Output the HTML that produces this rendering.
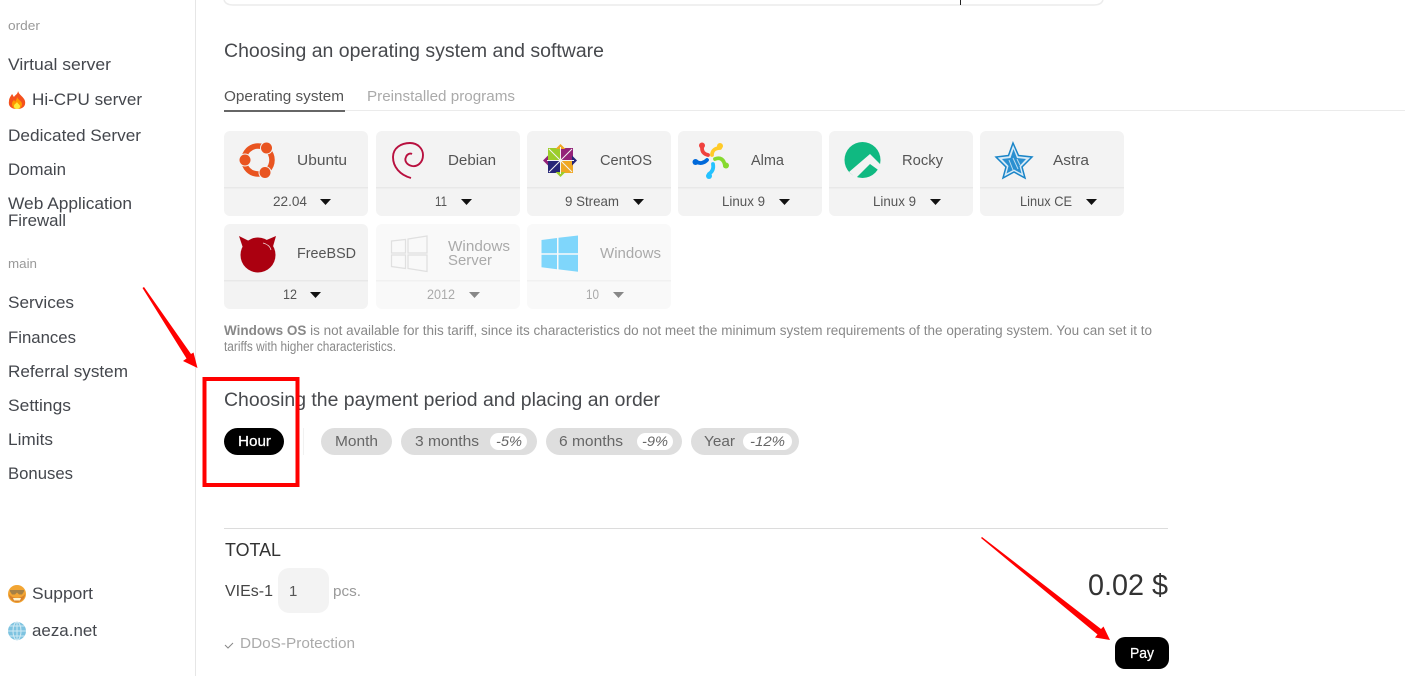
<!DOCTYPE html>
<html><head><meta charset="utf-8"><style>
html,body{margin:0;padding:0;background:#fff;overflow:hidden}
svg{display:block}
text{font-family:"Liberation Sans",sans-serif;white-space:pre}
.n{font-size:17px;fill:#44474d}
.s{font-size:13px;fill:#999}
.h{font-size:19px;fill:#47494d}
.l{font-size:15px;fill:#555}
.v{font-size:14px;fill:#555}
.d{fill:#aaa}
.p{font-size:15px;fill:#666}
.b{font-size:14px;fill:#666;font-style:italic}
.c{fill:#f3f3f3}
.c2{fill:#f9f9f9}
.t{font-size:13.500px;fill:#888}
</style></head><body>
<svg width="1412" height="676" viewBox="0 0 1412 676" xmlns="http://www.w3.org/2000/svg">
<rect width="1412" height="676" fill="#fff"/>
<rect x="195" y="0" width="1" height="676" fill="#e6e6e6"/>

<!-- sidebar -->
<text x="8" y="30" class="s" textLength="32" lengthAdjust="spacingAndGlyphs">order</text>
<text x="8" y="70" class="n" textLength="103" lengthAdjust="spacingAndGlyphs">Virtual server</text>
<text x="32" y="105" class="n" textLength="110" lengthAdjust="spacingAndGlyphs">Hi-CPU server</text>
<text x="8" y="141" class="n" textLength="133" lengthAdjust="spacingAndGlyphs">Dedicated Server</text>
<text x="8" y="175" class="n" textLength="58" lengthAdjust="spacingAndGlyphs">Domain</text>
<text x="8" y="209" class="n" textLength="124" lengthAdjust="spacingAndGlyphs">Web Application</text>
<text x="8" y="226" class="n" textLength="58" lengthAdjust="spacingAndGlyphs">Firewall</text>
<text x="8" y="268" class="s" textLength="29" lengthAdjust="spacingAndGlyphs">main</text>
<text x="8" y="308" class="n" textLength="66" lengthAdjust="spacingAndGlyphs">Services</text>
<text x="8" y="343" class="n" textLength="68" lengthAdjust="spacingAndGlyphs">Finances</text>
<text x="8" y="377" class="n" textLength="120" lengthAdjust="spacingAndGlyphs">Referral system</text>
<text x="8" y="411" class="n" textLength="63" lengthAdjust="spacingAndGlyphs">Settings</text>
<text x="8" y="445" class="n" textLength="45" lengthAdjust="spacingAndGlyphs">Limits</text>
<text x="8" y="479" class="n" textLength="65" lengthAdjust="spacingAndGlyphs">Bonuses</text>
<text x="32" y="599" class="n" textLength="61" lengthAdjust="spacingAndGlyphs">Support</text>
<text x="32" y="636" class="n" textLength="65" lengthAdjust="spacingAndGlyphs">aeza.net</text>

<!-- flame -->
<path d="M18 91c1 4 6 6 7 10 1 5-2 8-8 8s-9-3-8-8c0-3 2-5 3-7 1 1 1 2 2 3 1-2 4-3 4-6z" fill="#f4511e"/>
<path d="M17 97c1 3 5 4 5 7 0 3-2 5-5 5s-5-2-5-5c0-2 1-3 2-4 1 1 1 1 1 2 1-2 2-3 2-5z" fill="#ff9800"/>
<path d="M17 102c1 2 3 3 3 4 0 2-1 3-3 3s-3-1-3-3c0-2 2-2 3-4z" fill="#ffeb3b"/>
<!-- nerd -->
<circle cx="17" cy="594" r="9" fill="#f2a533"/>
<path d="M9 594a8 8 0 0 0 16 0c-3 5-13 5-16 0z" fill="#d9822b"/>
<path d="M10 590h14v1.500l-2 3h-3l-2-2-2 2h-3l-2-3z" fill="#a58045"/>
<path d="M13 598h8l-1 2.500h-6z" fill="#fff2cc"/>
<!-- globe -->
<circle cx="17" cy="631" r="9" fill="#7dc3e0"/>
<g fill="none" stroke="#cfe9f3" stroke-width="1"><ellipse cx="17" cy="631" rx="4" ry="9"/><path d="M8 631h18M9.500 626h15M9.500 636h15M17 622v18"/></g>

<!-- top box -->
<path d="M224 0c1 3 4 5 9 5h861c5 0 8-2 9-5" fill="none" stroke="#ececec" stroke-width="1.500"/>
<rect x="960" y="0" width="1" height="5" fill="#222"/>

<text x="224" y="57" class="h" textLength="380" lengthAdjust="spacingAndGlyphs">Choosing an operating system and software</text>
<text x="224" y="101" class="l" textLength="120" lengthAdjust="spacingAndGlyphs">Operating system</text>
<text x="367" y="101" class="l" style="fill:#aaa" textLength="148" lengthAdjust="spacingAndGlyphs">Preinstalled programs</text>
<rect x="224" y="110" width="1181" height="1" fill="#ebebeb"/>
<rect x="224" y="110" width="121" height="2" fill="#666"/>

<!-- cards -->
<rect class="c" x="224" y="131" width="144" height="85" rx="6"/>
<rect class="c" x="376" y="131" width="144" height="85" rx="6"/>
<rect class="c" x="527" y="131" width="144" height="85" rx="6"/>
<rect class="c" x="678" y="131" width="144" height="85" rx="6"/>
<rect class="c" x="829" y="131" width="144" height="85" rx="6"/>
<rect class="c" x="980" y="131" width="144" height="85" rx="6"/>
<rect class="c" x="224" y="224" width="144" height="85" rx="6"/>
<rect class="c2" x="376" y="224" width="144" height="85" rx="6"/>
<rect class="c2" x="527" y="224" width="144" height="85" rx="6"/>
<g fill="#e8e8e8">
<rect x="224" y="187" width="144" height="1.500"/><rect x="376" y="187" width="144" height="1.500"/><rect x="527" y="187" width="144" height="1.500"/><rect x="678" y="187" width="144" height="1.500"/><rect x="829" y="187" width="144" height="1.500"/><rect x="980" y="187" width="144" height="1.500"/><rect x="224" y="280" width="144" height="1.500"/>
</g>
<g fill="#f1f1f1"><rect x="376" y="280" width="144" height="1.500"/><rect x="527" y="280" width="144" height="1.500"/></g>

<text x="297" y="165" class="l" textLength="50" lengthAdjust="spacingAndGlyphs">Ubuntu</text>
<text x="448" y="165" class="l" textLength="48" lengthAdjust="spacingAndGlyphs">Debian</text>
<text x="600" y="165" class="l" textLength="52" lengthAdjust="spacingAndGlyphs">CentOS</text>
<text x="751" y="165" class="l" textLength="33" lengthAdjust="spacingAndGlyphs">Alma</text>
<text x="902" y="165" class="l" textLength="41" lengthAdjust="spacingAndGlyphs">Rocky</text>
<text x="1053" y="165" class="l" textLength="36" lengthAdjust="spacingAndGlyphs">Astra</text>
<text x="297" y="258" class="l" textLength="59" lengthAdjust="spacingAndGlyphs">FreeBSD</text>
<text x="448" y="251" class="l d" textLength="62" lengthAdjust="spacingAndGlyphs">Windows</text>
<text x="448" y="265" class="l d" textLength="44" lengthAdjust="spacingAndGlyphs">Server</text>
<text x="600" y="258" class="l d" textLength="61" lengthAdjust="spacingAndGlyphs">Windows</text>

<text x="273" y="206" class="v" textLength="34" lengthAdjust="spacingAndGlyphs">22.04</text>
<text x="435" y="206" class="v" textLength="12" lengthAdjust="spacingAndGlyphs">11</text>
<text x="565" y="206" class="v" textLength="54" lengthAdjust="spacingAndGlyphs">9 Stream</text>
<text x="722" y="206" class="v" textLength="43" lengthAdjust="spacingAndGlyphs">Linux 9</text>
<text x="873" y="206" class="v" textLength="43" lengthAdjust="spacingAndGlyphs">Linux 9</text>
<text x="1020" y="206" class="v" textLength="52" lengthAdjust="spacingAndGlyphs">Linux CE</text>
<text x="283" y="299" class="v" textLength="14" lengthAdjust="spacingAndGlyphs">12</text>
<text x="427" y="299" class="v d" textLength="28" lengthAdjust="spacingAndGlyphs">2012</text>
<text x="586" y="299" class="v d" textLength="13" lengthAdjust="spacingAndGlyphs">10</text>

<g fill="#111">
<path d="M320 199h11l-5.500 6z"/><path d="M461 199h11l-5.500 6z"/><path d="M633 199h11l-5.500 6z"/><path d="M779 199h11l-5.500 6z"/><path d="M930 199h11l-5.500 6z"/><path d="M1086 199h11l-5.500 6z"/><path d="M310 292h11l-5.500 6z"/>
</g>
<g fill="#888"><path d="M469 292h11l-5.500 6z"/><path d="M613 292h11l-5.500 6z"/></g>

<!-- ubuntu -->
<g>
<circle cx="258" cy="160" r="14" fill="none" stroke="#e95420" stroke-width="5.500"/>
<circle cx="266.500" cy="148" r="6.500" fill="#f3f3f3"/><circle cx="245" cy="160" r="6.500" fill="#f3f3f3"/><circle cx="265" cy="172.500" r="6.500" fill="#f3f3f3"/>
<circle cx="266.500" cy="148" r="5.500" fill="#e95420"/><circle cx="245" cy="160" r="5.500" fill="#e95420"/><circle cx="265" cy="172.500" r="5.500" fill="#e95420"/>
</g>
<!-- debian -->
<path d="M411 178C400 175 393 167 393 157C393 148 401 143 410 143C418 143 423 149 423 155C423 163 417 167 412 166C407 165 404 161 406 157C407 154 410 153 412 154" fill="none" stroke="#b8103f" stroke-width="1.900"/>
<!-- centos -->
<g>
<rect x="548" y="148" width="12" height="12" fill="#9ccd2a"/><rect x="561" y="148" width="12" height="12" fill="#932279"/><rect x="561" y="161" width="12" height="12" fill="#efa724"/><rect x="548" y="161" width="12" height="12" fill="#262577"/>
<path d="M560.500 144l5 5h-10z" fill="#efa724"/><path d="M577 160.500l-5 5v-10z" fill="#262577"/><path d="M560.500 177l-5-5h10z" fill="#9ccd2a"/><path d="M543 160.500l5-5v10z" fill="#932279"/>
<path d="M549 149l23 23M572 149l-23 23" stroke="#f3f3f3" stroke-width="1"/>
<path d="M560.500 147v27M547 160.500h27" stroke="#f3f3f3" stroke-width="1"/>
</g>
<!-- alma -->
<g fill="none" stroke-width="3.800" stroke-linecap="round">
<path d="M702 148c0 4 2 6 6 7" stroke="#f0423f"/><circle cx="702" cy="145.500" r="3" fill="#f0423f" stroke="none"/>
<path d="M712 155c0-5 4-7 8-7" stroke="#ffca28"/><circle cx="720" cy="146" r="3" fill="#ffca28" stroke="none"/>
<path d="M715 159c5-2 9 0 10 7" stroke="#86da2f"/><circle cx="726" cy="165.500" r="3" fill="#86da2f" stroke="none"/>
<path d="M713 164c1 5-1 8-4 10" stroke="#24c2ff"/><circle cx="709" cy="176" r="3" fill="#24c2ff" stroke="none"/>
<path d="M707 160c-3 3-7 4-10 2" stroke="#0069da"/><circle cx="695.500" cy="162" r="3" fill="#0069da" stroke="none"/>
</g>
<!-- rocky -->
<circle cx="862.500" cy="160" r="18" fill="#10b981"/>
<path d="M849 172L870 154L881 165L881 172L870 164L856 178z" fill="#f3f3f3"/>
<!-- astra -->
<path d="M1013 143L1018.500 155.500L1032 157L1022 167L1025 178L1014 172L1003 178L1006 167L996 157L1008.500 155.500z" fill="#d8eaf6" stroke="#1a85c8" stroke-width="1.500"/>
<path d="M1013.500 149L1017 158L1026 159L1019.500 166L1021.500 173.500L1014 169.500L1006.500 173.500L1008.500 166L1002 159L1010.500 158z" fill="#2a8fd0"/>
<path d="M1009 160l4 10M1013 158l5 11M1017 159l3 6" stroke="#bcdcf0" stroke-width="1"/>
<!-- freebsd -->
<circle cx="258" cy="255" r="17.500" fill="#ab0010"/>
<path d="M239 236L249 241L243 248z" fill="#ab0010"/>
<path d="M276 236L263 241.500L272 250z" fill="#ab0010"/>
<path d="M263 243c4 1 7 3 8 7" fill="none" stroke="#f3dada" stroke-width="0.800"/>
<!-- windows server -->
<g fill="none" stroke="#e0e0e0" stroke-width="1.300">
<path d="M391.500 241l14-1.500v13.500h-14z"/><path d="M408 239l19-3v17h-19z"/><path d="M391.500 255h14v13.500l-14-2z"/><path d="M408 255h19v16.500l-19-3z"/>
</g>
<!-- windows -->
<g fill="#7fd6fb">
<path d="M541.500 240l15.500-2v15.200h-15.500z"/><path d="M558.500 237.800l19.500-2.300v17.700h-19.500z"/><path d="M541.500 254.700h15.500v14.500l-15.500-2z"/><path d="M558.500 254.700h19.500v17l-19.500-2.300z"/>
</g>

<!-- description -->
<text x="224" y="335" class="t" textLength="928" lengthAdjust="spacingAndGlyphs"><tspan font-weight="bold">Windows OS</tspan> is not available for this tariff, since its characteristics do not meet the minimum system requirements of the operating system. You can set it to</text>
<text x="224" y="351" class="t" textLength="172" lengthAdjust="spacingAndGlyphs">tariffs with higher characteristics.</text>

<text x="224" y="406" class="h" textLength="436" lengthAdjust="spacingAndGlyphs">Choosing the payment period and placing an order</text>

<!-- pills -->
<rect x="224" y="428" width="60" height="27" rx="13.500" fill="#000"/>
<text x="238" y="446" font-size="15" fill="#fff" stroke="#fff" stroke-width="0.250" textLength="33" lengthAdjust="spacingAndGlyphs">Hour</text>
<rect x="303" y="428" width="1" height="27" fill="#f1f1f1"/>
<rect x="321" y="428" width="71" height="27" rx="13.500" fill="#dedede"/>
<rect x="401" y="428" width="136" height="27" rx="13.500" fill="#dedede"/>
<rect x="546" y="428" width="136" height="27" rx="13.500" fill="#dedede"/>
<rect x="691" y="428" width="108" height="27" rx="13.500" fill="#dedede"/>
<text x="335" y="446" class="p" textLength="43" lengthAdjust="spacingAndGlyphs">Month</text>
<text x="415" y="446" class="p" textLength="64" lengthAdjust="spacingAndGlyphs">3 months</text>
<text x="559" y="446" class="p" textLength="64" lengthAdjust="spacingAndGlyphs">6 months</text>
<text x="704" y="446" class="p" textLength="31" lengthAdjust="spacingAndGlyphs">Year</text>
<rect x="490" y="433" width="37" height="17" rx="8.500" fill="#fff"/>
<rect x="637" y="433" width="36" height="17" rx="8.500" fill="#fff"/>
<rect x="743" y="433" width="49" height="17" rx="8.500" fill="#fff"/>
<text x="496" y="446" class="b" textLength="26" lengthAdjust="spacingAndGlyphs">-5%</text>
<text x="642" y="446" class="b" textLength="26" lengthAdjust="spacingAndGlyphs">-9%</text>
<text x="750" y="446" class="b" textLength="35" lengthAdjust="spacingAndGlyphs">-12%</text>

<!-- total -->
<rect x="224" y="528" width="944" height="1" fill="#dcdcdc"/>
<text x="225" y="556" font-size="18" fill="#333" textLength="56" lengthAdjust="spacingAndGlyphs">TOTAL</text>
<text x="225" y="596" font-size="16" fill="#444" textLength="48" lengthAdjust="spacingAndGlyphs">VIEs-1</text>
<rect x="278" y="568" width="51" height="45" rx="11" fill="#f3f3f3"/>
<text x="289" y="596" font-size="15" fill="#555">1</text>
<text x="333" y="596" font-size="15" fill="#999" textLength="28" lengthAdjust="spacingAndGlyphs">pcs.</text>
<path d="M225 645l3 3 5-5" fill="none" stroke="#888" stroke-width="1"/>
<text x="240" y="648" font-size="15" fill="#aaa" textLength="115" lengthAdjust="spacingAndGlyphs">DDoS-Protection</text>
<text x="1088" y="595" font-size="30" fill="#333" textLength="80" lengthAdjust="spacingAndGlyphs">0.02 $</text>
<rect x="1115" y="637" width="54" height="32" rx="10" fill="#000"/>
<text x="1130" y="658" font-size="14.500" fill="#fff" stroke="#fff" stroke-width="0.250" textLength="24" lengthAdjust="spacingAndGlyphs">Pay</text>

<!-- annotations -->
<rect x="204.500" y="379" width="93" height="106" fill="none" stroke="#f00" stroke-width="4"/>
<path d="M142.500 288L144 287L191 354L193.500 352.500L197.500 368L183 361L186.500 358.500z" fill="#f00"/>
<path d="M981 538L982 537L1101 629L1103.500 626.500L1110 640L1095 637.500L1097.500 634.500z" fill="#f00"/>
</svg>
</body></html>
